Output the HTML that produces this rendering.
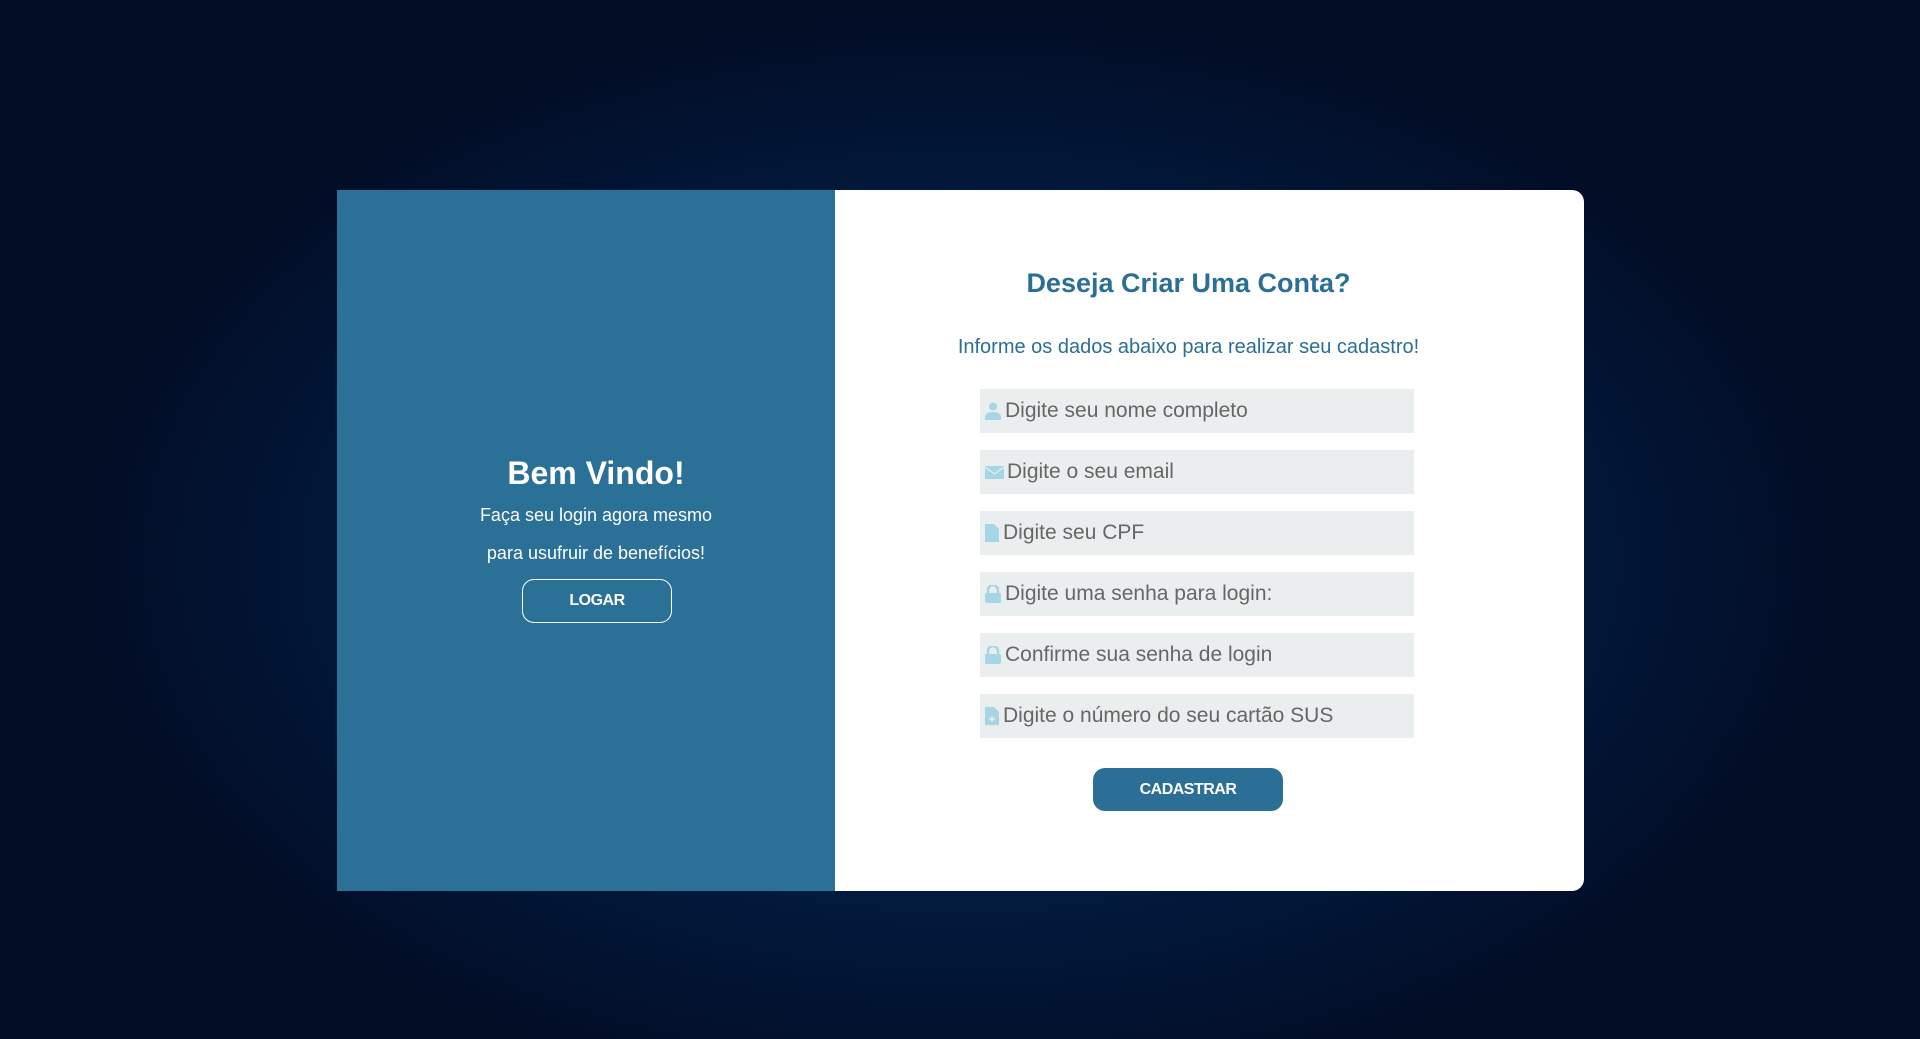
<!DOCTYPE html>
<html><head><meta charset="utf-8"><style>
*{margin:0;padding:0;box-sizing:border-box}
body{width:1920px;height:1039px;overflow:hidden;font-family:"Liberation Sans",sans-serif;
background:radial-gradient(ellipse 900px 560px at 960px 560px,#06305a 0%,#03224a 40%,#021535 75%,#020c24 100%);position:relative}
.card{position:absolute;left:337px;top:190px;width:1247px;height:701px;background:#fff;border-radius:0 12px 12px 0;overflow:hidden}
.left{position:absolute;left:0;top:0;width:498px;height:701px;background:#2b7097;color:#fff;text-align:center}
.left h1{position:absolute;top:265px;left:20px;width:478px;font-size:32px;font-weight:bold}
.left p{position:absolute;left:20px;width:478px;font-size:18px}
.logar{position:absolute;left:185px;top:389px;width:150px;height:44px;border:1.5px solid #fff;border-radius:12px;font-weight:bold;font-size:16px;line-height:41px;letter-spacing:-0.5px}
.right h2{position:absolute;left:498px;width:707px;top:78px;text-align:center;color:#2b6e96;font-size:27px;font-weight:bold}
.right .sub{position:absolute;left:498px;width:707px;top:146px;text-align:center;color:#2b6e96;font-size:20px}
.inp{position:absolute;left:643px;width:434px;height:44px;background:#ebeeef;color:#666;font-size:21px;line-height:44px;padding-left:25px}
.inp svg{position:absolute;left:5px;top:13px}
.cad{position:absolute;left:756px;top:578px;width:190px;height:43px;background:#2b6e96;border-radius:12px;color:#fff;font-weight:bold;font-size:16px;text-align:center;line-height:43px;letter-spacing:-0.5px}
</style></head><body>
<div class="card">
<div class="left">
<h1>Bem Vindo!</h1>
<p style="top:315px">Faça seu login agora mesmo</p>
<p style="top:353px">para usufruir de benefícios!</p>
<div class="logar">LOGAR</div>
</div>
<div class="right">
<h2>Deseja Criar Uma Conta?</h2>
<div class="sub">Informe os dados abaixo para realizar seu cadastro!</div>
<div class="inp" style="top:199px"><svg width="16" height="18" viewBox="0 0 16 18"><circle cx="8" cy="4.5" r="4" fill="#a6d5e6"/><path d="M0 18v-3c0-3 3-5 8-5s8 2 8 5v3z" fill="#a6d5e6"/></svg>Digite seu nome completo</div>
<div class="inp" style="top:260px;padding-left:27px"><svg width="19" height="18" viewBox="0 0 19 18"><rect x="0" y="3" width="19" height="13" fill="#a6d5e6"/><path d="M0 4l9.5 7L19 4" stroke="#ebeeef" stroke-width="1.2" fill="none"/></svg>Digite o seu email</div>
<div class="inp" style="top:321px;padding-left:23px"><svg width="14" height="18" viewBox="0 0 14 18"><path d="M0 0h9l5 5v13H0z" fill="#a6d5e6"/></svg>Digite seu CPF</div>
<div class="inp" style="top:382px"><svg width="16" height="18" viewBox="0 0 16 18"><path d="M3 8V5a5 5 0 0110 0v3" stroke="#a6d5e6" stroke-width="2.4" fill="none"/><rect x="0" y="8" width="16" height="10" rx="1.5" fill="#a6d5e6"/></svg>Digite uma senha para login:</div>
<div class="inp" style="top:443px"><svg width="16" height="18" viewBox="0 0 16 18"><path d="M3 8V5a5 5 0 0110 0v3" stroke="#a6d5e6" stroke-width="2.4" fill="none"/><rect x="0" y="8" width="16" height="10" rx="1.5" fill="#a6d5e6"/></svg>Confirme sua senha de login</div>
<div class="inp" style="top:504px;padding-left:23px"><svg width="14" height="18" viewBox="0 0 14 18"><path d="M0 0h9l5 5v13H0z" fill="#a6d5e6"/><path d="M7 9v6M4 12h6" stroke="#ebeeef" stroke-width="1.4"/></svg>Digite o número do seu cartão SUS</div>
<div class="cad">CADASTRAR</div>
</div>
</div>
</body></html>
